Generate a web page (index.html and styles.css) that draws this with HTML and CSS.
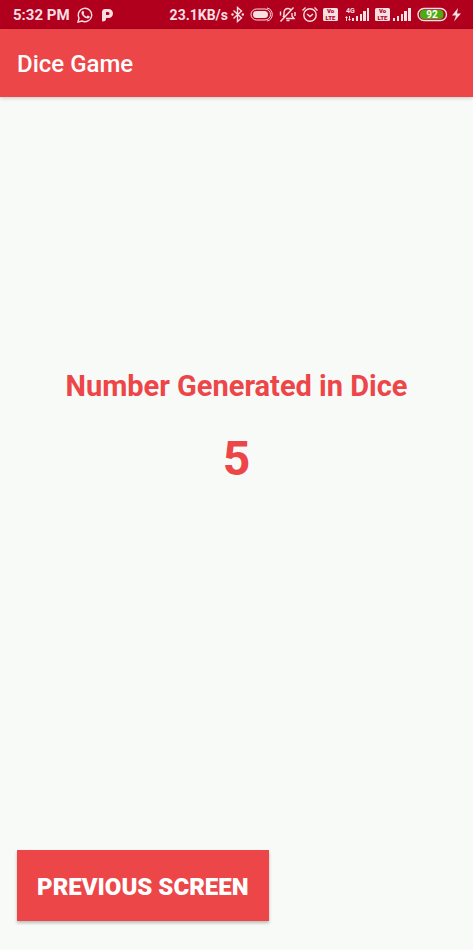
FILE: index.html
```html
<!DOCTYPE html>
<html lang="en">
<head>
<meta charset="utf-8">
<meta name="viewport" content="width=device-width, initial-scale=1">
<title>Dice Game</title>
<link rel="stylesheet" href="styles.css">
</head>
<body>
<div class="status">
  <span>5:32 PM</span>
  <svg class="chat" width="16" height="16" viewBox="0 0 16 16" role="img" aria-label="WhatsApp">
    <path class="line" d="M1 15l1-4a6.7 6.7 0 1 1 3 3z"/>
    <path d="M5.2 4.2q1-.8 1.5.2l.5 1.3q.1.5-.7 1.3 1.1 2 3 2.7l.9-1 .7-.1 1.6.9q.2.4-.3 1.2-1 1-2.700.6-3.900-1.200-5.200-4.900-.2-1.400.7-2.200z"/>
  </svg>
  <svg width="12" height="14" viewBox="0 0 12 14" role="img" aria-label="App notification">
    <path fill-rule="evenodd" d="M4 1h3.500a4.500 4.500 0 0 1 0 9H5v1q0 2.500-4 2.500V4.500Q1 1 4 1zm1 3v3h2a1.500 1.500 0 0 0 0-3z"/>
  </svg>
  <div class="indicators">
    <span>23.1KB/s</span>
    <svg width="20" height="29" viewBox="0 0 20 29" role="img" aria-label="Bluetooth">
      <path class="line" d="M5.500 10.500l8 7.500-4 3.500V7.500l4 3.500-8 7.500"/>
      <circle cx="4.500" cy="14.500" r="1.200"/><circle cx="14.800" cy="14.500" r="1.200"/>
    </svg>
    <svg width="28" height="29" viewBox="0 0 28 29" role="img" aria-label="Casting">
      <rect x="5" y="11" width="15" height="7" rx="3.500"/>
      <path class="line thin" d="M17 9H8.500a5.500 5.500 0 0 0 0 11H17a5.500 5.500 0 0 0 0-11M19 8c7 1 7 12 0 13"/>
    </svg>
    <svg width="23" height="29" viewBox="0 0 23 29" role="img" aria-label="Silent">
      <path class="line" d="M7 17l1-1.500V13q0-4.500 4-4.500 2 0 3 1.500m1 3v3l2 2.500h-8M10.500 20.500h3M4.500 21.500l13-14M4.500 11.500v4M19 12v4"/>
    </svg>
    <svg width="21" height="29" viewBox="0 0 21 29" role="img" aria-label="Alarm">
      <circle class="line" cx="11" cy="15" r="6.200"/>
      <path class="line" d="M3.500 10.500l3-3M18.500 10.500l-3-3M8 14l3 2.500 3-2.500"/>
    </svg>
    <svg width="22" height="29" viewBox="0 0 22 29" role="img" aria-label="VoLTE">
      <rect x="3" y="8" width="15" height="13" rx="1.500"/>
      <text class="lte" x="10.500" y="13">Vo</text><text class="lte" x="10.500" y="20">LTE</text>
    </svg>
    <svg width="30" height="29" viewBox="0 0 30 29" role="img" aria-label="4G signal">
      <text class="net" x="4" y="13">4G</text>
      <path d="M3 18l1.500-2L6 18H5v3H4v-3zM7 16h1v3h1l-1.500 2L6 19h1zM10 18h2v3h-2zM14 16h2v5h-2zM18 14h2v7h-2zM21 11h3v10h-3zM25 8h2v13h-2z"/>
    </svg>
    <svg width="19" height="29" viewBox="0 0 19 29" role="img" aria-label="VoLTE">
      <rect x="3" y="8" width="15" height="13" rx="1.500"/>
      <text class="lte" x="10.500" y="13">Vo</text><text class="lte" x="10.500" y="20">LTE</text>
    </svg>
    <svg width="23" height="29" viewBox="0 0 23 29" role="img" aria-label="Signal">
      <path d="M2 18h2v3H2zM6 16h2v5H6zM10 14h2v7h-2zM13 11h3v10h-3zM17 8h3v13h-3z"/>
    </svg>
    <svg width="35" height="29" viewBox="0 0 35 29" role="img" aria-label="Battery">
      <rect class="line" x="4" y="8.500" width="28.500" height="12" rx="6"/>
      <rect class="charge" x="6" y="10" width="23.500" height="9" rx="4"/>
      <text class="level" x="18" y="18">92</text>
    </svg>
    <svg width="15" height="29" viewBox="0 0 15 29" role="img" aria-label="Charging">
      <path d="M9 8l-6 7.500h4L5 21.500l7-8H8z"/>
    </svg>
  </div>
</div>
<header class="bar"><h1>Dice Game</h1></header>
<main>
  <section class="result">
    <h2>Number Generated in Dice</h2>
    <output>5</output>
  </section>
  <button type="button">PREVIOUS SCREEN</button>
</main>
</body>
</html>
```
FILE: styles.css
```css
* { box-sizing: border-box; }
body {
  margin: 0;
  min-height: 100vh;
  display: flex;
  flex-direction: column;
  background: #f8faf8;
  color: #ed4648;
  font-family: Roboto, sans-serif;
}
h1, h2 { margin: 0; }
.status {
  display: flex;
  align-items: center;
  height: 29px;
  padding: 0 9px 0 13px;
  background: #b1001e;
  color: #f8dfe2;
  font-size: 15px;
  font-weight: 700;
  white-space: nowrap;
}
.status svg { display: block; flex: none; fill: #f8dfe2; }
.status .chat { margin: 0 8px 0 7px; }
.status .line { fill: none; stroke: #f8dfe2; stroke-width: 1.4; }
.status .thin { stroke-width: 1; }
.indicators { display: flex; align-items: center; margin-left: auto; font-size: 14px; }
.status .lte { fill: #b1001e; font-size: 6px; font-weight: 900; text-anchor: middle; }
.net { font-size: 7px; font-weight: 700; }
.status .charge { fill: #4cac10; }
.level { fill: #fff; font-size: 10px; font-weight: 700; text-anchor: middle; }
.bar {
  display: flex;
  align-items: center;
  height: 68px;
  padding: 2px 17px 0;
  background: #ed4648;
  color: #fff;
  box-shadow: 0 1px 4px rgba(0, 0, 0, .2);
}
.bar h1 { font-size: 24px; font-weight: 500; }
main { flex: 1; display: flex; flex-direction: column; padding: 0 17px 29px; }
.result {
  flex: 1;
  display: flex;
  flex-direction: column;
  align-items: center;
  justify-content: center;
  gap: 27px;
  padding-bottom: 92px;
}
.result h2 { font-size: 29px; font-weight: 700; line-height: 36px; }
.result output { font-size: 48px; font-weight: 700; line-height: 56px; }
button {
  align-self: flex-start;
  height: 71px;
  padding: 2px 20px 0;
  border: 0;
  background: #ed4648;
  color: #fff;
  font: 900 24px Roboto, sans-serif;
  box-shadow: 0 2px 3px rgba(0, 0, 0, .25);
}
```
